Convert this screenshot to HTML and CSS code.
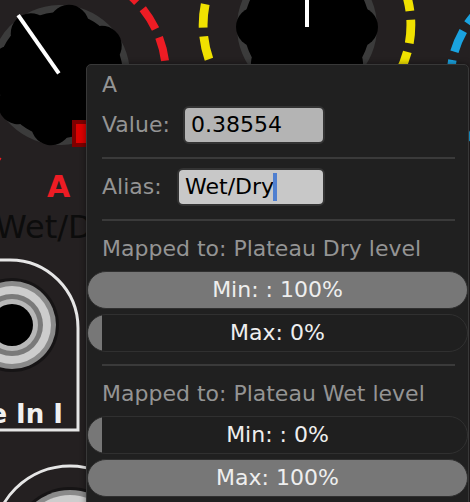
FILE: index.html
```html
<!DOCTYPE html>
<html lang="en">
  <head>
    <meta charset="UTF-8" />
    <meta name="viewport" content="width=device-width, initial-scale=1.0" />
    <title>Parameter Menu</title>
    <link rel="stylesheet" href="styles.css">
  </head>
  <body>
    <div class="rack">
      <!-- module panel behind the menu -->
      <svg class="panel-art" width="470" height="502" viewBox="0 0 470 502">
        <defs>
          <g id="knob-cap">
            <circle r="70" fill="#3b3b3b"/>
            <circle r="63" fill="#000"/>
            <circle cx="0" cy="-51" r="20" fill="#000"/>
            <circle cx="0" cy="-51" r="20" fill="#000" transform="rotate(45)"/>
            <circle cx="0" cy="-51" r="20" fill="#000" transform="rotate(90)"/>
            <circle cx="0" cy="-51" r="20" fill="#000" transform="rotate(135)"/>
            <circle cx="0" cy="-51" r="20" fill="#000" transform="rotate(180)"/>
            <circle cx="0" cy="-51" r="20" fill="#000" transform="rotate(225)"/>
            <circle cx="0" cy="-51" r="20" fill="#000" transform="rotate(270)"/>
            <circle cx="0" cy="-51" r="20" fill="#000" transform="rotate(315)"/>
          </g>
          <!-- range ring: 290 degree arc, gap at the bottom -->
          <path id="range-arc" d="M -60.8 86.8 A 106 106 0 1 1 60.8 86.8" fill="none" stroke-dasharray="24 9"/>
        </defs>

        <!-- knob A -->
        <use href="#range-arc" class="ring-red" transform="translate(60 75)"/>
        <g transform="translate(60 75) rotate(-35)">
          <use href="#knob-cap"/>
          <line x1="0" y1="-73" x2="0" y2="-2" stroke="#fff" stroke-width="4"/>
        </g>
        <rect x="72" y="120" width="20" height="27" fill="#7e0000"/>
        <rect x="76" y="124" width="16" height="19" fill="#dd0000"/>
        <text class="knob-letter" x="58.5" y="197">A</text>
        <text class="knob-name" x="60" y="238">Wet/Dry</text>

        <!-- knob B -->
        <use href="#range-arc" class="ring-yellow" transform="translate(307 25) scale(0.98)"/>
        <g transform="translate(307 27)">
          <use href="#knob-cap"/>
          <line x1="0" y1="-73" x2="0" y2="0" stroke="#fff" stroke-width="4"/>
        </g>

        <!-- knob C -->
        <use href="#range-arc" class="ring-blue" transform="translate(550 80) scale(0.94)"/>

        <!-- input jack -->
        <path d="M -40 260 H 10 A 68 68 0 0 1 78 328 V 430 H -40" fill="none" stroke="#e6e6e6" stroke-width="3"/>
        <circle cx="12" cy="325" r="47" fill="#161415"/>
        <circle cx="12" cy="325" r="44" fill="#8a8a8a"/>
        <circle cx="12" cy="325" r="39" fill="#cdcdcd"/>
        <circle cx="12" cy="325" r="31" fill="#7a7a7a"/>
        <circle cx="12" cy="325" r="26" fill="#b8b8b8"/>
        <circle cx="12" cy="325" r="21" fill="#000"/>
        <text class="jack-label" x="63" y="423">e In I</text>

        <!-- lower jack -->
        <circle cx="70" cy="543" r="77" fill="none" stroke="#e6e6e6" stroke-width="3"/>
        <circle cx="70" cy="545" r="58" fill="#161415"/>
        <circle cx="70" cy="545" r="55" fill="#8a8a8a"/>
        <circle cx="70" cy="545" r="50" fill="#cdcdcd"/>
      </svg>

      <div class="menu">
        <div class="menu-title">A</div>
        <div class="field-row">
          <span class="field-label">Value:</span>
          <div class="field value-field">0.38554</div>
        </div>
        <div class="separator"></div>
        <div class="field-row">
          <span class="field-label">Alias:</span>
          <div class="field alias-field">Wet/Dry<span class="caret"></span></div>
        </div>
        <div class="separator"></div>
        <div class="menu-label">Mapped to: Plateau Dry level</div>
        <div class="slider full">Min: : 100%</div>
        <div class="slider empty">Max: 0%</div>
        <div class="separator sep-tight"></div>
        <div class="menu-label">Mapped to: Plateau Wet level</div>
        <div class="slider empty">Min: : 0%</div>
        <div class="slider full">Max: 100%</div>
      </div>
    </div>
  </body>
</html>
```

FILE: styles.css
```css
* {
  box-sizing: border-box;
}
html,
body {
  margin: 0;
  height: 100%;
}
body {
  background-color: #242021;
  font-family: "DejaVu Sans", sans-serif;
  overflow: hidden;
}
.rack {
  position: relative;
  width: 470px;
  height: 502px;
  overflow: hidden;
}
.panel-art {
  position: absolute;
  left: 0;
  top: 0;
}
.ring-red {
  stroke: #ed1c24;
  stroke-width: 8px;
}
.ring-yellow {
  stroke: #f0e100;
  stroke-width: 9px;
}
.ring-blue {
  stroke: #1aa3e0;
  stroke-width: 9px;
}
.knob-letter {
  font-family: "DejaVu Sans", sans-serif;
  font-weight: bold;
  font-size: 30px;
  fill: #ed1c24;
  text-anchor: middle;
}
.knob-name {
  font-family: "DejaVu Sans", sans-serif;
  font-size: 32px;
  fill: #0c0c0c;
  text-anchor: middle;
}
.jack-label {
  font-family: "DejaVu Sans", sans-serif;
  font-weight: bold;
  font-size: 26px;
  fill: #f0f0f0;
  text-anchor: end;
}

/* context menu */
.menu {
  position: absolute;
  left: 86px;
  top: 64px;
  width: 383px;
  height: 470px;
  background-color: #202020;
  border: 1px solid #383838;
  border-radius: 5px;
  box-shadow: 0 0 6px rgba(0, 0, 0, 0.45);
  font-size: 22px;
  line-height: 26px;
  color: #949494;
}
.menu-title {
  margin: 7px 0 0 15px;
}
.field-row {
  display: flex;
  align-items: center;
  width: 223px;
  margin: 8px 0 0 15px;
}
.field {
  display: flex;
  align-items: center;
  height: 38px;
  margin-left: auto;
  padding-left: 6px;
  border: 2px solid #333;
  border-radius: 6px;
  color: #000;
}
.value-field {
  width: 142px;
  background-color: #b4b4b4;
}
.alias-field {
  width: 148px;
  background-color: #c8c8c8;
}
.caret {
  display: inline-block;
  width: 4px;
  height: 28px;
  margin-left: -1px;
  background-color: #4f7fd0;
}
.separator {
  height: 2px;
  margin: 13px 13px 0 15px;
  background-color: #3a3a3a;
}
.field-row + .separator + .field-row {
  margin-top: 9px;
}
.field-row + .separator + .menu-label {
  margin-top: 15px;
}
.sep-tight {
  margin-top: 12px;
}
.menu-label {
  margin: 15px 0 0 15px;
}
.slider {
  height: 38px;
  margin-top: 5px;
  border: 1px solid #303030;
  border-radius: 19px;
  color: #eeeeee;
  line-height: 36px;
  text-align: center;
}
.menu-label + .slider {
  margin-top: 9px;
}
.slider.full {
  background-color: #777777;
}
.slider.empty {
  background: linear-gradient(to right, #777777 0 14px, #1f1f1f 14px);
}
```
